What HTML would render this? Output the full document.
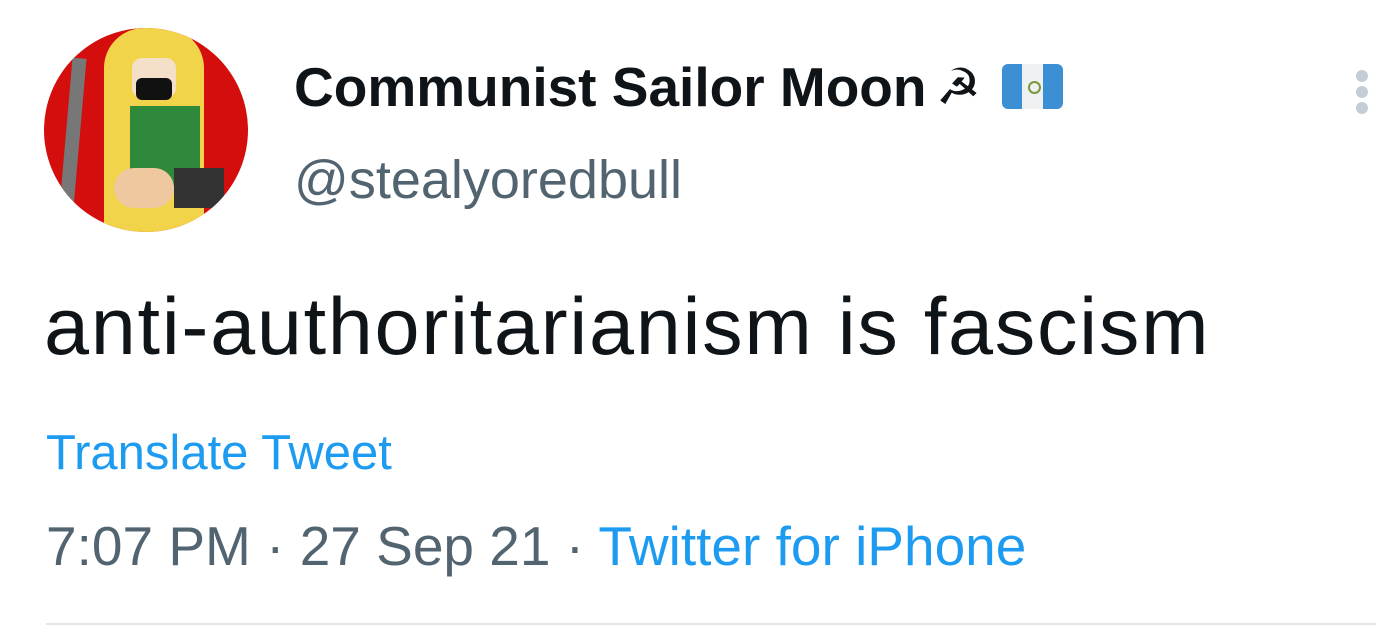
<!DOCTYPE html>
<html><head><meta charset="utf-8"><style>
body{margin:0;width:1376px;height:639px;background:#fff;position:relative;overflow:hidden;font-family:"Liberation Sans",Arial,sans-serif;}
.a{position:absolute;white-space:nowrap;}
</style></head><body>
<div class="a" style="left:44px;top:28px;width:204px;height:204px;border-radius:50%;background:#d40d0d;overflow:hidden;">
<div style="position:absolute;left:22px;top:30px;width:14px;height:150px;background:#777;transform:rotate(5deg)"></div>
<div style="position:absolute;left:60px;top:0;width:100px;height:204px;background:#f2d44a;border-radius:40px 40px 0 0"></div>
<div style="position:absolute;left:88px;top:30px;width:44px;height:40px;background:#f4e0c8;border-radius:10px"></div>
<div style="position:absolute;left:92px;top:50px;width:36px;height:22px;background:#111;border-radius:6px"></div>
<div style="position:absolute;left:86px;top:78px;width:70px;height:80px;background:#2e8a3a"></div>
<div style="position:absolute;left:70px;top:140px;width:60px;height:40px;background:#f0c8a0;border-radius:20px"></div>
<div style="position:absolute;left:130px;top:140px;width:50px;height:40px;background:#333"></div>
</div>
<div class="a" style="left:294px;top:55px;font-size:55px;font-weight:bold;color:#0f1419;">Communist Sailor Moon</div>
<div class="a" style="left:936px;top:58px;font-size:50px;color:#0f1419;">☭</div>
<div class="a" style="left:1002px;top:64px;width:61px;height:45px;border-radius:6px;overflow:hidden;background:#3d8fd4;">
<div style="position:absolute;left:20px;top:0;width:21px;height:45px;background:#eef0f2"></div>
<div style="position:absolute;left:26px;top:17px;width:9px;height:9px;border:2px solid #7a9a3a;border-radius:50%"></div>
</div>
<div class="a" style="left:1356px;top:70px;width:12px;height:12px;border-radius:50%;background:#c4cdd5"></div>
<div class="a" style="left:1356px;top:86px;width:12px;height:12px;border-radius:50%;background:#c4cdd5"></div>
<div class="a" style="left:1356px;top:102px;width:12px;height:12px;border-radius:50%;background:#c4cdd5"></div>
<div class="a" style="left:294px;top:149px;font-size:54px;color:#536471;">@stealyoredbull</div>
<div class="a" style="left:44px;top:281px;font-size:81px;letter-spacing:1.7px;color:#0f1419;">anti-authoritarianism is fascism</div>
<div class="a" style="left:46px;top:425px;font-size:49px;color:#1d9bf0;">Translate Tweet</div>
<div class="a" style="left:46px;top:514px;font-size:55px;color:#536471;">7:07 PM · 27 Sep 21 · <span style="color:#1d9bf0">Twitter for iPhone</span></div>
<div class="a" style="left:46px;top:623px;width:1330px;height:2px;background:#e1e6ea"></div>
</body></html>
